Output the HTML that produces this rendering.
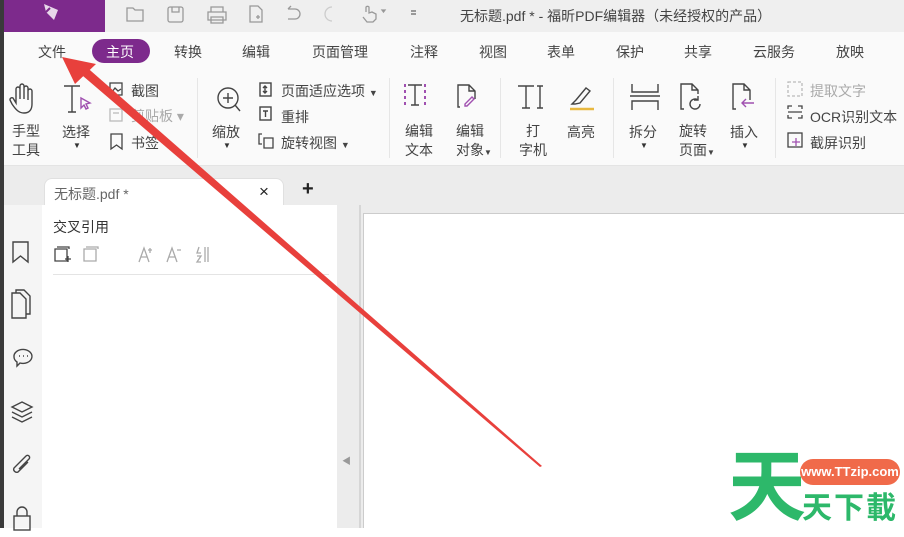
<!DOCTYPE html>
<html><head><meta charset="utf-8"><style>
*{margin:0;padding:0;box-sizing:border-box}
body{width:904px;height:528px;overflow:hidden;position:relative;background:#fff;font-family:"Liberation Sans","Noto Sans CJK SC",sans-serif;color:#333}
.a{position:absolute;white-space:nowrap}
.t{font-size:14px;color:#444}
.s{font-size:14px;color:#444}
.g{color:#aaa}
svg{position:absolute;overflow:visible}
</style></head><body>
<div class="a" style="left:0;top:0;width:4px;height:528px;background:#3a3a3a"></div>
<div class="a" style="left:4px;top:0;width:900px;height:32px;background:#efefef"></div>
<div class="a" style="left:4px;top:0;width:101px;height:32px;background:#7d2a8c"></div>
<svg style="left:40px;top:2px" width="24" height="24" viewBox="0 0 24 24"><path d="M4 2 L18 8 L14 18 L6 10 Z" fill="#e8d8ea"/><path d="M6 10 L10 6" stroke="#7d2a8c" stroke-width="2"/></svg>
<svg style="left:126px;top:4px" width="290" height="20" viewBox="0 0 290 20" fill="none" stroke="#999" stroke-width="1.3">
<path d="M1 4h6l2 2h8v11H1z"/><rect x="42" y="3" width="15" height="15" rx="2"/><path d="M46 3v5h7V3"/>
<path d="M82 8h18v8H82zM85 8V3h12v5M85 13h12v6H85z"/><path d="M124 2h8l4 4v12h-12z"/><path d="M130 13h4M132 11v4"/>
<path d="M162 5h7a5 5 0 0 1 0 10h-7M162 5l3-3"/><path d="M206 3a7 7 0 0 0 0 14" stroke="#ccc"/>
<path d="M240 8V3a2 2 0 0 1 3 0v6l3-1 4 2v5l-3 3h-6l-4-5"/><path d="M256 6l3 0-1.5 2z" fill="#666"/><path d="M285 7h5M285 10h5" stroke="#666"/>
</svg>
<div class="a" style="left:460px;top:6px;font-size:14px;color:#444">无标题.pdf * - 福昕PDF编辑器（未经授权的产品）</div>
<div class="a" style="left:4px;top:32px;width:900px;height:36px;background:#fafafa"></div>
<div class="a" style="left:92px;top:39px;width:58px;height:24px;border-radius:12px;background:#7d2a8c"></div>
<div class="a t" style="left:38px;top:42px">文件</div>
<div class="a t" style="left:106px;top:42px;color:#fff">主页</div>
<div class="a t" style="left:174px;top:42px">转换</div>
<div class="a t" style="left:242px;top:42px">编辑</div>
<div class="a t" style="left:312px;top:42px">页面管理</div>
<div class="a t" style="left:410px;top:42px">注释</div>
<div class="a t" style="left:479px;top:42px">视图</div>
<div class="a t" style="left:547px;top:42px">表单</div>
<div class="a t" style="left:616px;top:42px">保护</div>
<div class="a t" style="left:684px;top:42px">共享</div>
<div class="a t" style="left:753px;top:42px">云服务</div>
<div class="a t" style="left:836px;top:42px">放映</div>
<div class="a" style="left:4px;top:68px;width:900px;height:98px;background:#fafafa;border-bottom:1px solid #e4e4e4"></div>
<svg style="left:10px;top:83px" width="300" height="40" viewBox="0 0 300 40" fill="none" stroke="#444" stroke-width="1.4">
<path d="M6 20V6a2 2 0 0 1 4 0v10V3a2 2 0 0 1 4 0v13V5a2 2 0 0 1 4 0v12V8a2 2 0 0 1 4 0v13c0 6-3 9-8 9s-8-3-12-9l-2-4a2 2 0 0 1 3-2z"/>
<path d="M54 3h16M62 3v26M58 29h8"/><path d="M71 15l9 5-4 1 2 4-2 1-2-4-3 3z" stroke="#a050b0"/>
<circle cx="218" cy="15" r="10"/><path d="M213 15h10M218 10v10M225 22l5 6"/>
<rect x="250" y="0" width="11" height="13"/><path d="M255 3v7M253 5l2-2 2 2M253 8l2 2 2-2"/>
<rect x="250" y="24" width="11" height="13"/><path d="M253 28h5M255.5 28v6"/>
</svg>
<svg style="left:108px;top:81px" width="18" height="70" viewBox="0 0 18 70" fill="none" stroke-width="1.3">
<rect x="2" y="2" width="12" height="12" stroke="#444"/><path d="M4 11l3-4 3 3 3-2" stroke="#444"/>
<rect x="2" y="28" width="12" height="12" stroke="#bbb"/><path d="M5 32h6" stroke="#bbb"/>
<path d="M3 53h11v15l-5.5-4L3 68z" stroke="#444"/>
</svg>
<svg style="left:258px;top:133px" width="16" height="16" viewBox="0 0 16 16" fill="none" stroke="#444" stroke-width="1.3"><path d="M4 1h-3v10h3M6 5h9v10H6z"/></svg>
<div class="a s" style="left:12px;top:122px;line-height:19px">手型<br>工具</div>
<div class="a s" style="left:62px;top:122px">选择</div><div class="a" style="left:73px;top:141px;font-size:8px">▼</div>
<div class="a s" style="left:131px;top:81px">截图</div>
<div class="a s g" style="left:131px;top:106px">剪贴板 ▾</div>
<div class="a s" style="left:131px;top:133px">书签</div>
<div class="a s" style="left:212px;top:122px">缩放</div><div class="a" style="left:223px;top:141px;font-size:8px">▼</div>
<div class="a s" style="left:281px;top:81px">页面适应选项 <span style="font-size:9px">▼</span></div>
<div class="a s" style="left:281px;top:107px">重排</div>
<div class="a s" style="left:281px;top:133px">旋转视图 <span style="font-size:9px">▼</span></div>
<div class="a" style="left:197px;top:78px;width:1px;height:80px;background:#e6e6e6"></div>
<div class="a" style="left:389px;top:78px;width:1px;height:80px;background:#e6e6e6"></div>
<div class="a" style="left:500px;top:78px;width:1px;height:80px;background:#e6e6e6"></div>
<div class="a" style="left:613px;top:78px;width:1px;height:80px;background:#e6e6e6"></div>
<div class="a" style="left:775px;top:78px;width:1px;height:80px;background:#e6e6e6"></div>
<svg style="left:400px;top:82px" width="380" height="32" viewBox="0 0 380 32" fill="none" stroke="#444" stroke-width="1.4">
<path d="M8 3h14M15 3v20M11 23h8" /><path d="M5 2v3M5 8v3M5 14v3M5 20v3M25 2v3M25 8v3M25 14v3M25 20v3" stroke="#a050b0" stroke-width="2"/>
<path d="M60 25h-2V3h11l6 6v8M69 3v6h6"/><path d="M74 17l-7 7h-2v-2l7-7z" stroke="#a050b0"/>
<path d="M118 4h16M126 4v22M122 26h8M140 4v22M137 4h6M137 26h6"/>
<path d="M172 22l4-4 10-12 4 3-10 12-5 1z"/><path d="M170 27h24" stroke="#e8b840" stroke-width="2.5"/>
<path d="M232 2v8h26V2M232 28v-9h26v9M230 14h30"/>
<path d="M284 27h-3V2h11l6 6v4M292 2v6h6"/><path d="M300 22a5 5 0 1 1-2-4M298 14v4h-4"/>
<path d="M336 27h-3V2h11l6 6v10M344 2v6h6"/><path d="M354 21h-12M346 17l-4 4 4 4" stroke="#a050b0"/>
</svg>
<div class="a s" style="left:405px;top:122px;line-height:19px">编辑<br>文本</div>
<div class="a s" style="left:456px;top:122px;line-height:19px">编辑<br>对象<span style="font-size:8px">▼</span></div>
<div class="a s" style="left:519px;top:122px;line-height:19px;text-align:center">打<br>字机</div>
<div class="a s" style="left:567px;top:122px">高亮</div>
<div class="a s" style="left:629px;top:122px">拆分</div><div class="a" style="left:640px;top:141px;font-size:8px">▼</div>
<div class="a s" style="left:679px;top:122px;line-height:19px">旋转<br>页面<span style="font-size:8px">▼</span></div>
<div class="a s" style="left:730px;top:122px">插入</div><div class="a" style="left:741px;top:141px;font-size:8px">▼</div>
<svg style="left:786px;top:80px" width="20" height="72" viewBox="0 0 20 72" fill="none" stroke-width="1.3">
<rect x="2" y="2" width="14" height="14" stroke="#bbb" stroke-dasharray="3 2"/>
<path d="M2 29v-3h4M12 26h4v3M2 35v3h4M12 38h4v-3M2 32h14" stroke="#444"/>
<rect x="2" y="53" width="14" height="14" stroke="#444"/><path d="M10 58v8M6 62h8" stroke="#a050b0"/>
</svg>
<div class="a s g" style="left:810px;top:81px">提取文字</div>
<div class="a s" style="left:810px;top:107px">OCR识别文本</div>
<div class="a s" style="left:810px;top:133px">截屏识别</div>
<div class="a" style="left:4px;top:166px;width:900px;height:362px;background:#ececec"></div>
<div class="a" style="left:44px;top:178px;width:240px;height:30px;background:#fff;border-radius:8px 8px 0 0;border:1px solid #e0e0e0;border-bottom:none"></div>
<div class="a s" style="left:54px;top:184px;color:#666">无标题.pdf *</div>
<div class="a" style="left:259px;top:182px;font-size:17px;color:#222">×</div>
<div class="a" style="left:302px;top:178px;font-size:20px;color:#222;font-weight:bold">+</div>
<div class="a" style="left:4px;top:205px;width:38px;height:323px;background:#f5f5f5"></div>
<div class="a" style="left:42px;top:205px;width:295px;height:323px;background:#fff"></div>
<div class="a s" style="left:53px;top:217px;color:#333">交叉引用</div>
<svg style="left:53px;top:245px" width="170" height="20" viewBox="0 0 170 20" fill="none" stroke-width="1.3">
<path d="M4 2h12v2M2 4h12v12H2z M12 14h6M15 11v6" stroke="#444"/><path d="M33 2h12v2M31 4h12v12H31z" stroke="#aaa"/>
<path d="M86 17l5-14 5 14M88 12h6M97 3v5M95 5h4" stroke="#aaa"/><path d="M114 17l5-14 5 14M116 12h6M124 5h4" stroke="#aaa"/>
<path d="M146 2l-2 6h4M144 11h4l-4 6h4M152 2v15M155 2v15" stroke="#aaa"/>
</svg>
<div class="a" style="left:53px;top:274px;width:276px;height:1px;background:#e4e4e4"></div>
<svg style="left:10px;top:240px" width="26" height="288" viewBox="0 0 26 288" fill="none" stroke="#444" stroke-width="1.4">
<path d="M3 2h15v20l-7.5-6L3 22z"/>
<path d="M4 78h-2V53h8l6 6v19H4z"/><path d="M6 53v-3h8l6 6v18h-4"/>
<path d="M4 117a9 7 0 1 1 6 6l-3 3v-4a9 7 0 0 1-3-5z"/><path d="M9 116h1M13 116h1M17 116h1"/>
<path d="M12 162l10 5-10 5-10-5zM2 172l10 5 10-5M2 177l10 5 10-5"/>
<path d="M18 222l-10 10a3 3 0 0 1-4-4l12-12a2 2 0 0 1 3 3l-10 10"/>
<rect x="4" y="276" width="16" height="14"/><path d="M7 276v-4a5 5 0 0 1 10 0v4"/>
</svg>
<div class="a" style="left:359px;top:205px;width:2px;height:323px;background:#d6d6d6"></div>
<div class="a" style="left:342px;top:454px;font-size:9px;color:#999">◀</div>
<div class="a" style="left:363px;top:213px;width:541px;height:315px;background:#fff;border-left:1px solid #ccc;border-top:1px solid #ccc"></div>
<svg style="left:0;top:0" width="904" height="528" viewBox="0 0 904 528">
<polygon points="76,70 83,64 542,466 540,467" fill="#e8403c"/>
<polygon points="62,57 96,64 75,84" fill="#e8403c"/>
</svg>
<div class="a" style="left:722px;top:448px;width:182px;height:80px;background:#fff"></div>
<div class="a" style="left:728px;top:436px;font-size:78px;font-weight:bold;color:#2db86a;line-height:90px;font-family:'Noto Sans CJK SC',sans-serif">天</div>
<div class="a" style="left:800px;top:459px;width:100px;height:26px;border-radius:13px;background:#f06a4a;color:#fff;font-size:13px;font-weight:bold;text-align:center;line-height:26px">www.TTzip.com</div>
<div class="a" style="left:802px;top:488px;font-size:30px;font-weight:bold;color:#2db86a;letter-spacing:2px;line-height:34px;font-family:'Noto Sans CJK SC',sans-serif">天下載</div>
</body></html>
